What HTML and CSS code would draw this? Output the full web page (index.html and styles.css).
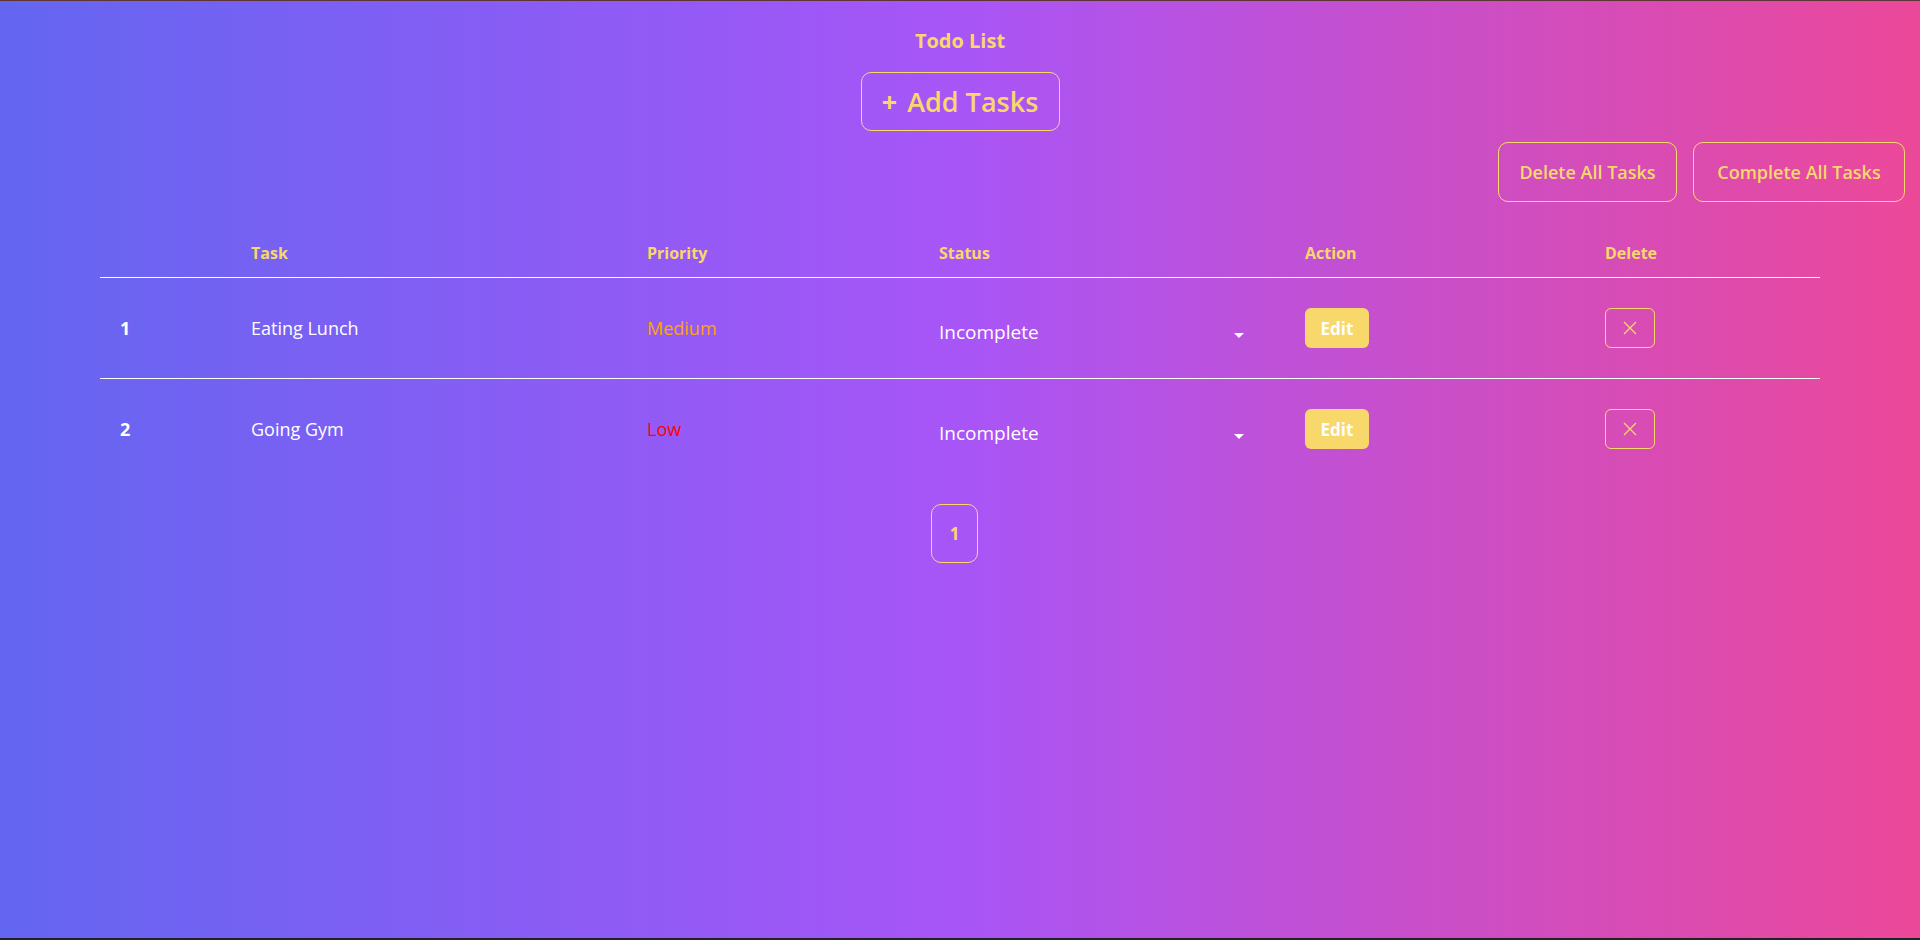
FILE: index.html
```html
<!DOCTYPE html>
<html lang="en">
<head>
<meta charset="utf-8">
<title>Todo List</title>
<link rel="stylesheet" href="styles.css">
</head>
<body>
<div class="page">
  <header class="top">
    <h1 class="title">Todo List</h1>
    <button class="add-btn"><span class="plus">+</span>Add Tasks</button>
  </header>
  <div class="bulk">
    <button class="outline-btn btn-delete-all">Delete All Tasks</button>
    <button class="outline-btn btn-complete-all">Complete All Tasks</button>
  </div>
  <table class="tasks">
    <colgroup>
      <col class="c-num">
      <col class="c-task">
      <col class="c-priority">
      <col class="c-status">
      <col class="c-action">
      <col class="c-delete">
    </colgroup>
    <thead>
      <tr>
        <th></th>
        <th>Task</th>
        <th>Priority</th>
        <th>Status</th>
        <th>Action</th>
        <th>Delete</th>
      </tr>
    </thead>
    <tbody>
      <tr>
        <td class="num">1</td>
        <td>Eating Lunch</td>
        <td class="prio-medium">Medium</td>
        <td>
          <div class="status">
            <select class="status-select">
              <option>Incomplete</option>
              <option>Complete</option>
            </select>
          </div>
        </td>
        <td><button class="edit-btn">Edit</button></td>
        <td>
          <button class="del-btn" aria-label="Delete">
            <svg width="14" height="14" viewBox="0 0 14 14"><path d="M1 1L13 13M13 1L1 13" stroke="#f9d86b" stroke-width="1.3" fill="none"/></svg>
          </button>
        </td>
      </tr>
      <tr>
        <td class="num">2</td>
        <td>Going Gym</td>
        <td class="prio-low">Low</td>
        <td>
          <div class="status">
            <select class="status-select">
              <option>Incomplete</option>
              <option>Complete</option>
            </select>
          </div>
        </td>
        <td><button class="edit-btn">Edit</button></td>
        <td>
          <button class="del-btn" aria-label="Delete">
            <svg width="14" height="14" viewBox="0 0 14 14"><path d="M1 1L13 13M13 1L1 13" stroke="#f9d86b" stroke-width="1.3" fill="none"/></svg>
          </button>
        </td>
      </tr>
    </tbody>
  </table>
  <nav class="pager">
    <button class="page-btn">1</button>
  </nav>
</div>
</body>
</html>
```

FILE: styles.css
```css
html {
  background: #222222;
}

body {
  margin: 0;
  border-top: 1px solid #5e3434;
  font-family: "Open Sans", "Liberation Sans", sans-serif;
  color: #ffffff;
}

.page {
  min-height: 937px;
  background: linear-gradient(to right, #6366f1, #a855f7, #ec4899);
  display: flex;
  flex-direction: column;
  align-items: center;
}

.top {
  padding-top: 26px;
  display: flex;
  flex-direction: column;
  align-items: center;
}

.title {
  margin: 0;
  font-size: 20px;
  line-height: 28px;
  font-weight: 700;
  color: #f9d86b;
}

.add-btn {
  margin-top: 17px;
  width: 199px;
  height: 59px;
  padding: 0;
  border: 1px solid #f9d86b;
  border-radius: 10px;
  background: transparent;
  color: #f9d86b;
  font-family: inherit;
  font-size: 27px;
  font-weight: 600;
  display: flex;
  align-items: center;
  justify-content: center;
}

.plus {
  margin-right: 10px;
  font-weight: 700;
}

.bulk {
  align-self: stretch;
  display: flex;
  justify-content: flex-end;
  gap: 16px;
  padding-right: 15px;
  margin-top: 11px;
}

.outline-btn {
  height: 60px;
  padding: 0;
  border: 1px solid #f9d86b;
  border-radius: 10px;
  background: transparent;
  color: #f9d86b;
  font-family: inherit;
  font-size: 18px;
  font-weight: 600;
}

.btn-delete-all {
  width: 179px;
}

.btn-complete-all {
  width: 212px;
}

.tasks {
  margin-top: 27px;
  width: 1720px;
  border-collapse: collapse;
  table-layout: fixed;
}

.c-num { width: 131px; }
.c-task { width: 396px; }
.c-priority { width: 292px; }
.c-status { width: 366px; }
.c-action { width: 300px; }
.c-delete { width: 235px; }

.tasks thead tr {
  border-bottom: 1px solid #ffffff;
}

.tasks th {
  text-align: left;
  padding: 12px 0 12px 20px;
  line-height: 24px;
  font-size: 16px;
  font-weight: 700;
  color: #f9d86b;
}

.tasks td {
  height: 100px;
  padding: 0 0 0 20px;
  vertical-align: middle;
  font-size: 18px;
  color: #ffffff;
}

.tasks tbody tr + tr {
  border-top: 1px solid #ffffff;
}

.tasks td.num {
  font-weight: 700;
}

.prio-medium {
  color: #ffa500 !important;
}

.prio-low {
  color: #ff0000 !important;
}

.status {
  display: flex;
  align-items: center;
  width: 305px;
  margin-top: 8px;
}

.status::after {
  content: "";
  width: 0;
  height: 0;
  border-left: 5px solid transparent;
  border-right: 5px solid transparent;
  border-top: 5px solid #ffffff;
  margin-top: 6px;
}

.status-select {
  flex: 1;
  appearance: none;
  -webkit-appearance: none;
  background: transparent;
  border: 0;
  padding: 0;
  outline: none;
  color: #ffffff;
  font-family: inherit;
  font-size: 19px;
}

.status-select option {
  color: #000000;
}

.edit-btn {
  width: 64px;
  height: 40px;
  padding: 0;
  border: 0;
  border-radius: 6px;
  background: #f9d86b;
  color: #ffffff;
  font-family: inherit;
  font-size: 17px;
  font-weight: 700;
}

.del-btn {
  width: 50px;
  height: 40px;
  padding: 0;
  border: 1px solid #f9d86b;
  border-radius: 6px;
  background: transparent;
  display: flex;
  align-items: center;
  justify-content: center;
}

.pager {
  margin-top: 25px;
  margin-right: 11px;
}

.page-btn {
  width: 47px;
  height: 59px;
  padding: 0;
  border: 1px solid #f9d86b;
  border-radius: 10px;
  background: transparent;
  color: #f9d86b;
  font-family: inherit;
  font-size: 17px;
  font-weight: 700;
}
```
